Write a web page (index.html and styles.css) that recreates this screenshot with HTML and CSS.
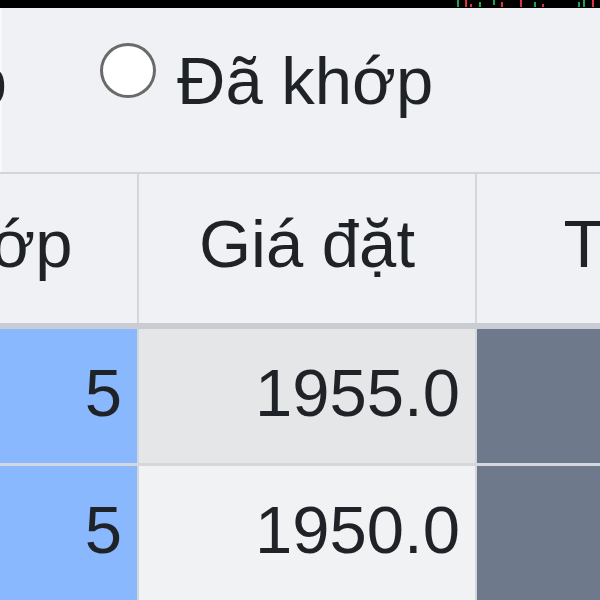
FILE: index.html
```html
<!DOCTYPE html>
<html lang="vi">
<head>
<meta charset="utf-8">
<title>Lệnh</title>
<link rel="stylesheet" href="styles.css">
</head>
<body>
<div class="topbar">
  <span class="candle up" style="left:457px;top:0;height:7px"></span>
  <span class="candle down" style="left:465px;top:0;height:7px"></span>
  <span class="candle down" style="left:470px;top:4px;height:3px"></span>
  <span class="candle up" style="left:479px;top:2px;height:5px"></span>
  <span class="candle up" style="left:493px;top:0;height:5px"></span>
  <span class="candle down" style="left:501px;top:2px;height:5px"></span>
  <span class="candle down" style="left:520px;top:0;height:7px"></span>
  <span class="candle up" style="left:534px;top:2px;height:5px"></span>
  <span class="candle down" style="left:542px;top:4px;height:3px"></span>
  <span class="candle up" style="left:578px;top:2px;height:5px"></span>
  <span class="candle up" style="left:583px;top:0;height:7px"></span>
  <span class="candle down" style="left:592px;top:0;height:7px"></span>
</div>
<div class="panel">
  <div class="filters">
    <span class="clip"><span class="label">Chờ khớp</span></span>
    <label class="radio-item">
      <span class="radio"></span>
      <span class="label">Đã khớp</span>
    </label>
  </div>
  <div class="table">
    <div class="row head">
      <div class="cell c1">KL khớp</div>
      <div class="cell c2">Giá đặt</div>
      <div class="cell c3">Trạng thái</div>
    </div>
    <div class="row body hover">
      <div class="cell c1 num">5</div>
      <div class="cell c2 num">1955.0</div>
      <div class="cell c3"></div>
    </div>
    <div class="row body">
      <div class="cell c1 num">5</div>
      <div class="cell c2 num">1950.0</div>
      <div class="cell c3"></div>
    </div>
  </div>
</div>
</body>
</html>
```
FILE: styles.css
```css
* { box-sizing: border-box; }
html, body {
  margin: 0;
  padding: 0;
  width: 600px;
  height: 600px;
  overflow: hidden;
  background: #eff1f4;
  font-family: "Liberation Sans", Arial, sans-serif;
  color: #1f2327;
}
.topbar {
  position: relative;
  height: 8px;
  background: #000;
}
.candle {
  position: absolute;
  width: 2px;
}
.candle.up { background: #1fa35a; }
.candle.down { background: #e0333d; }

.panel {
  height: 592px;
  overflow: hidden;
  box-shadow: inset 2px 0 0 #f8f9fb;
}
.filters {
  height: 164px;
  padding-top: 33px;
  display: flex;
  align-items: flex-start;
  overflow: hidden;
}
.label {
  font-size: 67px;
  line-height: 80px;
  white-space: nowrap;
}
.clip {
  width: 7px;
  flex: none;
  display: flex;
  justify-content: flex-end;
  overflow: hidden;
}
.radio-item {
  display: flex;
  align-items: flex-start;
  margin-left: 93px;
}
.radio {
  width: 56px;
  height: 55px;
  margin-top: 2px;
  border: 3px solid #6a6a6a;
  border-radius: 50%;
  background: #fff;
  flex: none;
}
.radio-item .label { margin-left: 21px; }

.table {
  margin-left: -242px;
  border-top: 2px solid #d2d6db;
}
.row {
  display: grid;
  grid-template-columns: 381px 338px 474px;
}
.cell {
  font-size: 67px;
  line-height: 80px;
  white-space: nowrap;
  border-right: 2px solid #d3d7db;
}
.head {
  height: 155px;
  border-bottom: 6px solid #c9cdd3;
}
.head .cell {
  text-align: center;
  padding-top: 30px;
  background: #eff1f4;
}
.body {
  height: 137px;
  border-bottom: 3px solid #d4d7db;
}
.body .cell {
  padding-top: 24px;
}
.num {
  text-align: right;
  padding-right: 15px;
}
.body .c1 { background: #8ab8fe; }
.body .c2 { background: #f0f2f4; }
.body.hover .c2 { background: #e5e6e8; }
.body .c3 { background: #6e7a8b; }
```
